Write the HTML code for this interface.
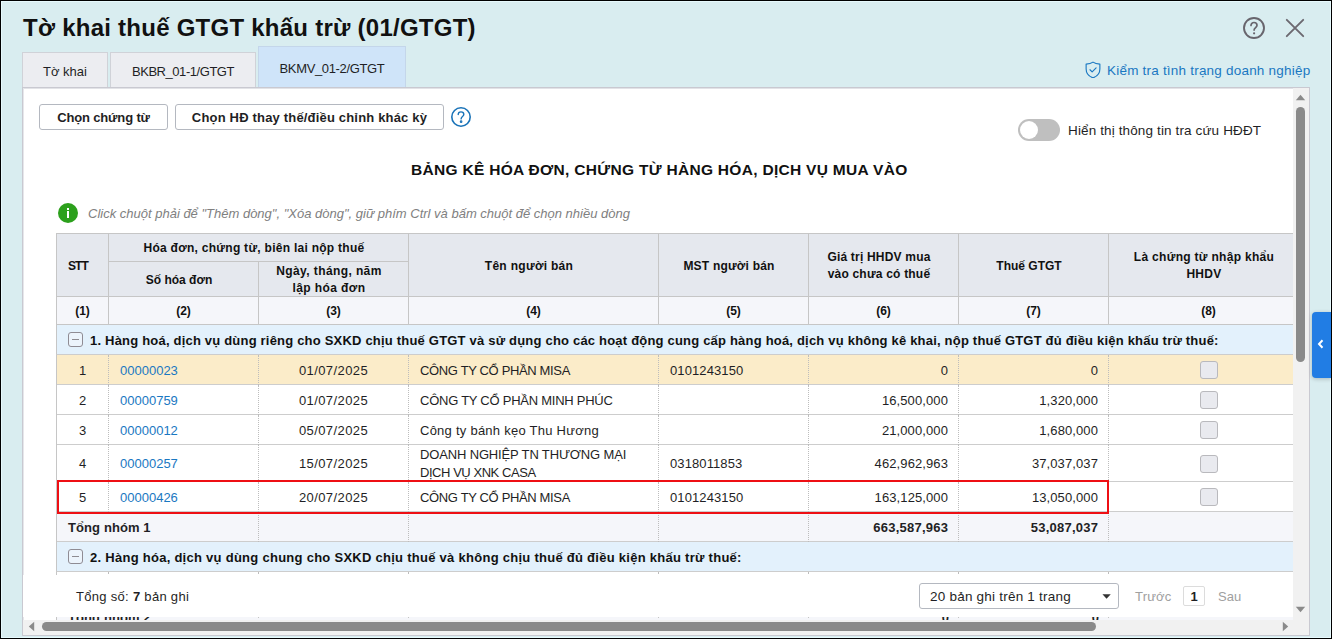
<!DOCTYPE html>
<html lang="vi">
<head>
<meta charset="utf-8">
<title>Tờ khai thuế GTGT khấu trừ (01/GTGT)</title>
<style>
*{box-sizing:border-box;margin:0;padding:0}
html,body{width:1332px;height:639px;overflow:hidden;background:#d9edf0}
body{font-family:"Liberation Sans",sans-serif;font-size:13px;color:#1f1f25;position:relative}
#app{position:absolute;left:0;top:0;width:1332px;height:639px;background:#d9edf0;overflow:hidden}
#frame{position:absolute;left:0;top:0;width:1332px;height:639px;border:1px solid #000;z-index:50;pointer-events:none}
.abs{position:absolute;white-space:nowrap}
#title{left:23px;top:12px;font-size:24px;letter-spacing:0.25px;font-weight:bold;line-height:32px;color:#111}
.tab{position:absolute;border:1px solid #d0d2d8;border-bottom:none;background:#ecedf1;text-align:center;font-size:13px;color:#1f1f25}
#link{color:#1a78c2;font-size:13.5px;letter-spacing:0.21px}
#panel{position:absolute;left:22px;top:87px;width:1288px;height:549px;background:#fff;border:1px solid #c9c9d1;overflow:hidden}
/* inside panel coordinates are page coords minus (24,88) -> use wrapper */
#in{position:absolute;left:-23px;top:-88px;width:1332px;height:639px}
.btn{position:absolute;top:104px;height:26px;border:1px solid #b4b8c0;border-radius:3px;background:#fff;font-weight:bold;font-size:13px;line-height:24px;padding-top:1px;text-align:center;color:#1f1f25}
#heading{font-weight:bold;font-size:15.5px;letter-spacing:0.3px;color:#111}
#info{font-style:italic;color:#808080;font-size:13px}
/* table */
#tbl{position:absolute;left:56px;top:233px;width:1237px;height:342px;overflow:hidden}
#tbl .c{position:absolute;display:flex;align-items:center;border-left:1px solid #c6c6c6;border-top:1px solid #c6c6c6;overflow:hidden}
#tbl .h{background:#e5e8ee;justify-content:center;padding-right:9px;padding-top:2px;text-align:center;font-weight:bold;font-size:12px;line-height:17px;color:#111}
#tbl .n{background:#f5f6fa;justify-content:center;font-weight:bold;font-size:12px;color:#111}
#tbl .d{border-left:1px dotted #bdbdbd;border-top:none;font-size:13px;line-height:18px;padding-top:1px}
#tbl .d.first{border-left:1px solid #c6c6c6}
#tbl .ctr{justify-content:center}
#tbl .lft{justify-content:flex-start;padding-left:11px}
#tbl .rgt{justify-content:flex-end;padding-right:10px}
#tbl .tl{padding-left:11px}
.rowbg{position:absolute;left:0;width:1252px;border-bottom:1px solid #cdcdcd;background:#fff}
.rowbg.sel{background:#fbecc9}
.rowbg.tot{background:#f5f6fa}
.sec{position:absolute;left:0;width:1252px;padding-top:1px;background:#e3f1fc;border-left:1px solid #c6c6c6;border-bottom:1px solid #cdcdcd;display:flex;align-items:center;font-size:13px;white-space:nowrap;color:#111}
.sec .col{display:block;width:15px;height:15px;margin-top:-1px;border:1px solid #8f8c94;border-radius:3px;background:#ecf4fc;margin-left:11px;margin-right:7px;position:relative}
.sec .col:after{content:"";position:absolute;left:3px;top:6px;width:7px;height:1px;background:#8d8b91}
.lnk{color:#1a78c2}
.cb{display:block;width:18px;height:18px;margin-top:-1px;border:1px solid #b9b9bd;border-radius:3px;background:#e9eaef}
.hdrline{position:absolute;left:56px;top:296px;width:1237px;height:1px;background:#c6c6c6}
</style>
</head>
<body>
<div id="app">
  <div id="title" class="abs">Tờ khai thuế GTGT khấu trừ (01/GTGT)</div>
  <svg class="abs" style="left:1242px;top:16px" width="24" height="24" viewBox="0 0 24 24" fill="none" stroke="#68656d" stroke-width="1.900"><circle cx="12" cy="12" r="10"/><path d="M9 9.400c0-1.800 1.300-2.900 3-2.900s3 1.100 3 2.700c0 2.200-2.900 2.500-2.900 4.900" stroke-width="1.700" stroke-linecap="round"/><circle cx="12.100" cy="17.300" r="1.100" fill="#68656d" stroke="none"/></svg>
  <svg class="abs" style="left:1285px;top:18px" width="20" height="20" viewBox="0 0 20 20" stroke="#6c6971" stroke-width="1.900" stroke-linecap="round"><path d="M1.800 1.800L18.200 18.200M18.200 1.800L1.800 18.200"/></svg>

  <div class="tab" style="left:22px;top:52px;width:86px;height:36px;line-height:38px">Tờ khai</div>
  <div class="tab" style="left:110px;top:52px;width:146px;height:36px;line-height:38px;letter-spacing:-0.45px">BKBR_01-1/GTGT</div>
  <div class="tab" style="left:258px;top:46px;width:148px;height:42px;line-height:44px;background:#cfe4f9;border-color:#c4d6ea;letter-spacing:-0.35px">BKMV_01-2/GTGT</div>

  <svg class="abs" style="left:1085.400px;top:60.500px" width="16" height="17.900" viewBox="0 0 17 19" fill="none" stroke="#1a78c2" stroke-width="1.2" stroke-linejoin="round" stroke-linecap="round"><path d="M8.5 1.2C6.6 2.6 4 3.2 1.2 3.3v5.2c0 4.6 3 7.9 7.3 9.4 4.300-1.500 7.300-4.800 7.300-9.400V3.300C13 3.200 10.400 2.600 8.500 1.200z"/><path d="M5.300 9.300l2.300 2.300 4.200-4.300"/></svg>
  <div id="link" class="abs" style="left:1107px;top:63px;line-height:16px">Kiểm tra tình trạng doanh nghiệp</div>

  <div id="panel"><div id="in">
    <div class="abs" style="left:23px;top:88px;width:1286px;height:1px;background:#e2e3e7"></div><div class="abs" style="left:23px;top:88px;width:1px;height:547px;background:#e6e7eb"></div>
    <div class="btn" style="left:39px;width:129px;letter-spacing:-0.15px">Chọn chứng từ</div>
    <div class="btn" style="left:175px;width:269px;letter-spacing:0.18px">Chọn HĐ thay thế/điều chỉnh khác kỳ</div>
    <svg class="abs" style="left:450px;top:106px" width="22" height="22" viewBox="0 0 22 22" fill="none" stroke="#1a73b8" stroke-width="1.6"><circle cx="11" cy="11" r="9.2"/><path d="M8.200 8.600c0-1.700 1.300-2.700 2.800-2.700s2.800 1 2.800 2.500c0 2.100-2.700 2.300-2.700 4.500" stroke-width="1.400" stroke-linecap="round"/><circle cx="11.100" cy="15.700" r="0.550" fill="#1a73b8"/></svg>

    <div class="abs" style="left:1018px;top:119px;width:42px;height:22px;border-radius:11px;background:#bfbfbf"><div style="position:absolute;left:2px;top:2px;width:18px;height:18px;border-radius:9px;background:#fff"></div></div>
    <div class="abs" style="left:1068px;top:123px;line-height:16px;font-size:13.5px;letter-spacing:0.13px">Hiển thị thông tin tra cứu HĐĐT</div>

    <div id="heading" class="abs" style="left:411px;top:161px;line-height:18px">BẢNG KÊ HÓA ĐƠN, CHỨNG TỪ HÀNG HÓA, DỊCH VỤ MUA VÀO</div>

    <div class="abs" style="left:58px;top:203px;width:20px;height:20px;border-radius:10px;background:#2ca01c"><div style="position:absolute;left:8.800px;top:5px;width:2.400px;height:2.200px;background:#fff"></div><div style="position:absolute;left:8.800px;top:8.300px;width:2.400px;height:6.500px;background:#fff"></div></div>
    <div id="info" class="abs" style="left:88px;top:206px;line-height:16px">Click chuột phải để "Thêm dòng", "Xóa dòng", giữ phím Ctrl và bấm chuột để chọn nhiều dòng</div>

    <div id="tbl">
<div class="sec" style="top:92px;height:30px;"><i class="col"></i><b style="letter-spacing:0.2px">1. Hàng hoá, dịch vụ dùng riêng cho SXKD chịu thuế GTGT và sử dụng cho các hoạt động cung cấp hàng hoá, dịch vụ không kê khai, nộp thuế GTGT đủ điều kiện khấu trừ thuế:</b></div>
<div class="rowbg sel" style="top:122px;height:30px;"></div>
<div class="c d ctr first" style="left:0px;top:122px;width:52px;height:30px;"><span>1</span></div>
<div class="c d lft" style="left:52px;top:122px;width:150px;height:30px;"><span class="lnk">00000023</span></div>
<div class="c d ctr" style="left:202px;top:122px;width:150px;height:30px;"><span style="letter-spacing:0.4px;">01/07/2025</span></div>
<div class="c d lft" style="left:352px;top:122px;width:250px;height:30px;"><span style="letter-spacing:-0.35px;">CÔNG TY CỔ PHẦN MISA</span></div>
<div class="c d lft" style="left:602px;top:122px;width:150px;height:30px;"><span style="letter-spacing:0.1px;">0101243150</span></div>
<div class="c d rgt" style="left:752px;top:122px;width:150px;height:30px;"><span style="letter-spacing:0.1px;">0</span></div>
<div class="c d rgt" style="left:902px;top:122px;width:150px;height:30px;"><span style="letter-spacing:0.1px;">0</span></div>
<div class="c d ctr" style="left:1052px;top:122px;width:200px;height:30px;"><i class="cb"></i></div>
<div class="rowbg " style="top:152px;height:30px;"></div>
<div class="c d ctr first" style="left:0px;top:152px;width:52px;height:30px;"><span>2</span></div>
<div class="c d lft" style="left:52px;top:152px;width:150px;height:30px;"><span class="lnk">00000759</span></div>
<div class="c d ctr" style="left:202px;top:152px;width:150px;height:30px;"><span style="letter-spacing:0.4px;">01/07/2025</span></div>
<div class="c d lft" style="left:352px;top:152px;width:250px;height:30px;"><span style="letter-spacing:-0.25px;">CÔNG TY CỔ PHẦN MINH PHÚC</span></div>
<div class="c d lft" style="left:602px;top:152px;width:150px;height:30px;"><span style="letter-spacing:0.1px;"></span></div>
<div class="c d rgt" style="left:752px;top:152px;width:150px;height:30px;"><span style="letter-spacing:0.1px;">16,500,000</span></div>
<div class="c d rgt" style="left:902px;top:152px;width:150px;height:30px;"><span style="letter-spacing:0.1px;">1,320,000</span></div>
<div class="c d ctr" style="left:1052px;top:152px;width:200px;height:30px;"><i class="cb"></i></div>
<div class="rowbg " style="top:182px;height:30px;"></div>
<div class="c d ctr first" style="left:0px;top:182px;width:52px;height:30px;"><span>3</span></div>
<div class="c d lft" style="left:52px;top:182px;width:150px;height:30px;"><span class="lnk">00000012</span></div>
<div class="c d ctr" style="left:202px;top:182px;width:150px;height:30px;"><span style="letter-spacing:0.4px;">05/07/2025</span></div>
<div class="c d lft" style="left:352px;top:182px;width:250px;height:30px;"><span style="letter-spacing:0.25px;">Công ty bánh kẹo Thu Hương</span></div>
<div class="c d lft" style="left:602px;top:182px;width:150px;height:30px;"><span style="letter-spacing:0.1px;"></span></div>
<div class="c d rgt" style="left:752px;top:182px;width:150px;height:30px;"><span style="letter-spacing:0.1px;">21,000,000</span></div>
<div class="c d rgt" style="left:902px;top:182px;width:150px;height:30px;"><span style="letter-spacing:0.1px;">1,680,000</span></div>
<div class="c d ctr" style="left:1052px;top:182px;width:200px;height:30px;"><i class="cb"></i></div>
<div class="rowbg " style="top:212px;height:37px;"></div>
<div class="c d ctr first" style="left:0px;top:212px;width:52px;height:37px;"><span>4</span></div>
<div class="c d lft" style="left:52px;top:212px;width:150px;height:37px;"><span class="lnk">00000257</span></div>
<div class="c d ctr" style="left:202px;top:212px;width:150px;height:37px;"><span style="letter-spacing:0.4px;">15/07/2025</span></div>
<div class="c d lft" style="left:352px;top:212px;width:250px;height:37px;"><span style="letter-spacing:-0.2px;"><span style="letter-spacing:-0.15px">DOANH NGHIỆP TN THƯƠNG MẠI</span><br><span style="letter-spacing:-0.45px">DỊCH VỤ XNK CASA</span></span></div>
<div class="c d lft" style="left:602px;top:212px;width:150px;height:37px;"><span style="letter-spacing:0.1px;">0318011853</span></div>
<div class="c d rgt" style="left:752px;top:212px;width:150px;height:37px;"><span style="letter-spacing:0.1px;">462,962,963</span></div>
<div class="c d rgt" style="left:902px;top:212px;width:150px;height:37px;"><span style="letter-spacing:0.1px;">37,037,037</span></div>
<div class="c d ctr" style="left:1052px;top:212px;width:200px;height:37px;"><i class="cb"></i></div>
<div class="rowbg " style="top:249px;height:30px;"></div>
<div class="c d ctr first" style="left:0px;top:249px;width:52px;height:30px;"><span>5</span></div>
<div class="c d lft" style="left:52px;top:249px;width:150px;height:30px;"><span class="lnk">00000426</span></div>
<div class="c d ctr" style="left:202px;top:249px;width:150px;height:30px;"><span style="letter-spacing:0.4px;">20/07/2025</span></div>
<div class="c d lft" style="left:352px;top:249px;width:250px;height:30px;"><span style="letter-spacing:-0.35px;">CÔNG TY CỔ PHẦN MISA</span></div>
<div class="c d lft" style="left:602px;top:249px;width:150px;height:30px;"><span style="letter-spacing:0.1px;">0101243150</span></div>
<div class="c d rgt" style="left:752px;top:249px;width:150px;height:30px;"><span style="letter-spacing:0.1px;">163,125,000</span></div>
<div class="c d rgt" style="left:902px;top:249px;width:150px;height:30px;"><span style="letter-spacing:0.1px;">13,050,000</span></div>
<div class="c d ctr" style="left:1052px;top:249px;width:200px;height:30px;"><i class="cb"></i></div>
<div class="rowbg tot" style="top:279px;height:30px;"></div>
<div class="c d lft first tl" style="left:0px;top:279px;width:202px;height:30px;"><span style="letter-spacing:0.1px"><b>Tổng nhóm 1</b></span></div>
<div class="c d" style="left:202px;top:279px;width:150px;height:30px;"></div>
<div class="c d" style="left:352px;top:279px;width:250px;height:30px;"></div>
<div class="c d" style="left:602px;top:279px;width:150px;height:30px;"></div>
<div class="c d rgt" style="left:752px;top:279px;width:150px;height:30px;"><span style="letter-spacing:0.25px;margin-right:-0.25px"><b>663,587,963</b></span></div>
<div class="c d rgt" style="left:902px;top:279px;width:150px;height:30px;"><span style="letter-spacing:0.25px;margin-right:-0.25px"><b>53,087,037</b></span></div>
<div class="c d" style="left:1052px;top:279px;width:200px;height:30px;"></div>
<div class="sec" style="top:309px;height:30px;"><i class="col"></i><b style="letter-spacing:0.27px">2. Hàng hóa, dịch vụ dùng chung cho SXKD chịu thuế và không chịu thuế đủ điều kiện khấu trừ thuế:</b></div>
<div class="rowbg " style="top:339px;height:30px;"></div>
<div class="c d ctr first" style="left:0px;top:339px;width:52px;height:30px;"><span>6</span></div>
<div class="c d lft" style="left:52px;top:339px;width:150px;height:30px;"><span class="lnk">00000431</span></div>
<div class="c d ctr" style="left:202px;top:339px;width:150px;height:30px;"><span style="letter-spacing:0.4px;">22/07/2025</span></div>
<div class="c d lft" style="left:352px;top:339px;width:250px;height:30px;"><span style="letter-spacing:-0.35px;">CÔNG TY CỔ PHẦN MISA</span></div>
<div class="c d lft" style="left:602px;top:339px;width:150px;height:30px;"><span style="letter-spacing:0.1px;">0101243150</span></div>
<div class="c d rgt" style="left:752px;top:339px;width:150px;height:30px;"><span style="letter-spacing:0.1px;">20,000,000</span></div>
<div class="c d rgt" style="left:902px;top:339px;width:150px;height:30px;"><span style="letter-spacing:0.1px;">1,600,000</span></div>
<div class="c d ctr" style="left:1052px;top:339px;width:200px;height:30px;"><i class="cb"></i></div>
<div class="c h" style="left:0px;top:0px;width:52px;height:63px;"><span style="letter-spacing:-0.9px;">STT</span></div>
<div class="c h" style="left:52px;top:0px;width:300px;height:28px;"><span style="letter-spacing:0.27px;">Hóa đơn, chứng từ, biên lai nộp thuế</span></div>
<div class="c h" style="left:52px;top:28px;width:150px;height:35px;"><span style="letter-spacing:0px;">Số hóa đơn</span></div>
<div class="c h" style="left:202px;top:28px;width:150px;height:35px;"><span style="letter-spacing:0.4px;">Ngày, tháng, năm<br>lập hóa đơn</span></div>
<div class="c h" style="left:352px;top:0px;width:250px;height:63px;"><span style="letter-spacing:0.3px;">Tên người bán</span></div>
<div class="c h" style="left:602px;top:0px;width:150px;height:63px;"><span style="letter-spacing:0.2px;">MST người bán</span></div>
<div class="c h" style="left:752px;top:0px;width:150px;height:63px;"><span style="letter-spacing:0.2px;">Giá trị HHDV mua<br>vào chưa có thuế</span></div>
<div class="c h" style="left:902px;top:0px;width:150px;height:63px;"><span style="letter-spacing:0px;">Thuế GTGT</span></div>
<div class="c h" style="left:1052px;top:0px;width:200px;height:63px;"><span style="letter-spacing:0.3px;">Là chứng từ nhập khẩu<br>HHDV</span></div>
<div class="c n" style="left:0px;top:63px;width:52px;height:28px;"><span>(1)</span></div>
<div class="c n" style="left:52px;top:63px;width:150px;height:28px;"><span>(2)</span></div>
<div class="c n" style="left:202px;top:63px;width:150px;height:28px;"><span>(3)</span></div>
<div class="c n" style="left:352px;top:63px;width:250px;height:28px;"><span>(4)</span></div>
<div class="c n" style="left:602px;top:63px;width:150px;height:28px;"><span>(5)</span></div>
<div class="c n" style="left:752px;top:63px;width:150px;height:28px;"><span>(6)</span></div>
<div class="c n" style="left:902px;top:63px;width:150px;height:28px;"><span>(7)</span></div>
<div class="c n" style="left:1052px;top:63px;width:200px;height:28px;"><span>(8)</span></div>
    </div>
    <div class="hdrline"></div><div class="hdrline" style="top:324px"></div>
    <!-- red highlight -->
    <div class="abs" style="left:57px;top:480px;width:1052px;height:34px;border:2px solid #ee0f14"></div>

    <!-- sliver of next rows -->
    <div class="abs" style="left:56px;top:617px;width:1237px;height:3px;overflow:hidden;background:#f5f6fa;font-weight:bold;font-size:13px;line-height:16px"><div style="position:absolute;left:12px;top:-7px;letter-spacing:0.1px">Tổng nhóm 2</div><div style="position:absolute;right:344px;top:-7px">0</div><div style="position:absolute;right:194px;top:-7px">0</div><div style="position:absolute;left:0;top:0;width:1px;height:3px;background:#c6c6c6"></div><div style="position:absolute;left:52px;top:0;width:1px;height:1px;background:#c4c4c4"></div><div style="position:absolute;left:202px;top:0;width:1px;height:1px;background:#c4c4c4"></div><div style="position:absolute;left:352px;top:0;width:1px;height:1px;background:#c4c4c4"></div><div style="position:absolute;left:602px;top:0;width:1px;height:1px;background:#c4c4c4"></div><div style="position:absolute;left:752px;top:0;width:1px;height:1px;background:#c4c4c4"></div><div style="position:absolute;left:902px;top:0;width:1px;height:1px;background:#c4c4c4"></div><div style="position:absolute;left:1052px;top:0;width:1px;height:1px;background:#c4c4c4"></div></div>

    <!-- pagination bar -->
    <div class="abs" style="left:23px;top:575px;width:1270px;height:42px;background:#fff"></div>
    <div class="abs" style="left:76px;top:589px;line-height:16px;letter-spacing:0.3px">Tổng số: <b>7</b> bản ghi</div>
    <div class="abs" style="left:919px;top:583px;width:200px;height:26px;border:1px solid #b4b8c0;border-radius:3px;background:#fff;line-height:24px;padding-top:1px;padding-left:10px;font-size:13.5px;letter-spacing:0.22px">20 bản ghi trên 1 trang<svg style="position:absolute;left:181.500px;top:9.500px" width="9.200" height="5.200" viewBox="0 0 11 6"><path d="M0.500 0.300L5.500 5.700L10.500 0.300z" fill="#333"/></svg></div>
    <div class="abs" style="left:1135px;top:589px;line-height:16px;color:#a0a0a0;letter-spacing:0.2px">Trước</div>
    <div class="abs" style="left:1183px;top:586px;width:22px;height:20px;border:1px solid #dcdcdc;border-radius:2px;text-align:center;line-height:19px;font-weight:bold">1</div>
    <div class="abs" style="left:1218px;top:589px;line-height:16px;color:#a0a0a0">Sau</div>

    <!-- vertical scrollbar -->
    <div class="abs" style="left:1293px;top:88px;width:16px;height:532px;background:#f1f1f1"></div>
    <svg class="abs" style="left:1295px;top:94px" width="11" height="7" viewBox="0 0 11 7"><path d="M0.800 6.200L5.500 0.800L10.200 6.200z" fill="#8a8a8a"/></svg>
    <div class="abs" style="left:1296px;top:107px;width:9px;height:255px;border-radius:4.500px;background:#8a8a8a"></div>
    <svg class="abs" style="left:1295px;top:606px" width="11" height="7" viewBox="0 0 11 7"><path d="M0.800 0.800L5.500 6.200L10.200 0.800z" fill="#8a8a8a"/></svg>
    <!-- horizontal scrollbar -->
    <div class="abs" style="left:23px;top:620px;width:1286px;height:15px;background:#f1f1f1"></div>
    <svg class="abs" style="left:28px;top:621px" width="7" height="11" viewBox="0 0 7 11"><path d="M6.200 0.800L0.800 5.500L6.200 10.200z" fill="#8a8a8a"/></svg>
    <div class="abs" style="left:42px;top:622px;width:1054px;height:9px;border-radius:4.500px;background:#8a8a8a"></div>
    <svg class="abs" style="left:1282px;top:621px" width="7" height="11" viewBox="0 0 7 11"><path d="M0.800 0.800L6.200 5.500L0.800 10.200z" fill="#8a8a8a"/></svg>
  </div></div>

  <div class="abs" style="left:1312px;top:312px;width:20px;height:66px;background:#217de4;border-radius:4px 0 0 4px;box-shadow:0 1px 4px rgba(0,0,0,0.220);z-index:45"><svg style="position:absolute;left:5px;top:27px" width="8" height="10" viewBox="0 0 8 10" fill="none" stroke="#fff" stroke-width="2"><path d="M5.500 1.200L2 5l3.500 3.800"/></svg></div>
  <div class="abs" style="left:1px;top:1px;width:1330px;height:637px;border:1px solid #e7fafd;z-index:40;pointer-events:none"></div><div id="frame"></div>
</div>
</body>
</html>
